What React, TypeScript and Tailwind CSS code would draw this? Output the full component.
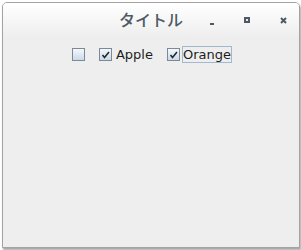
import React from "react";

function Check() {
  return (
    <svg width="9" height="9" viewBox="0 0 9 9">
      <path d="M1.5 5 L3.5 7.5 L8 2" fill="none" stroke="#1f2a33" strokeWidth="1.6" />
    </svg>
  );
}

function Box({ checked }: { checked?: boolean }) {
  return (
    <div className="flex h-[13px] w-[13px] items-center justify-center border border-[#7b8a99] bg-gradient-to-b from-[#f5f8fb] to-[#ccd9e6]">
      {checked && <Check />}
    </div>
  );
}

export default function App() {
  return (
    <div className="h-[250px] w-[301px] bg-white p-[2px] pr-[1px]" style={{ fontFamily: '"DejaVu Sans", sans-serif' }}>
      <div className="flex h-[246px] w-[298px] flex-col overflow-hidden rounded-t-[5px] border border-[#a3a3a3] bg-[#eeeeee] shadow-[1px_2px_2px_rgba(0,0,0,0.35)]">
        {/* title bar */}
        <div className="grid h-[34px] grid-cols-[1fr_auto_1fr] items-center bg-gradient-to-b from-white to-[#eeeeee]">
          <div />
          <div
            className="pb-[3px] text-[16px] font-medium text-[#4d5a66]"
            style={{ fontFamily: '"Noto Sans CJK JP", sans-serif' }}
          >
            タイトル
          </div>
          <div className="flex items-center justify-end gap-[30px] pr-[12px]">
            <div className="mt-[8px] h-[2px] w-[4px] bg-[#4d5a66]" />
            <div className="flex h-[6px] w-[6px] items-center justify-center bg-[#4d5a66]">
              <div className="h-[2px] w-[2px] bg-[#e8e8e8]" />
            </div>
            <svg width="7" height="7" viewBox="0 0 7 7">
              <path d="M1 1 L6 6 M6 1 L1 6" stroke="#4d5a66" strokeWidth="2" />
            </svg>
          </div>
        </div>
        {/* content */}
        <div className="flex items-center justify-center pl-[2px] pt-[8px] text-[13px] text-[#1d1d1d]">
          <Box />
          <div className="ml-[14px]">
            <Box checked />
          </div>
          <span className="ml-[4px]">Apple</span>
          <div className="ml-[14px]">
            <Box checked />
          </div>
          <span className="ml-[2px] border border-[#a3b8cc] leading-[15px]">Orange</span>
        </div>
      </div>
    </div>
  );
}
